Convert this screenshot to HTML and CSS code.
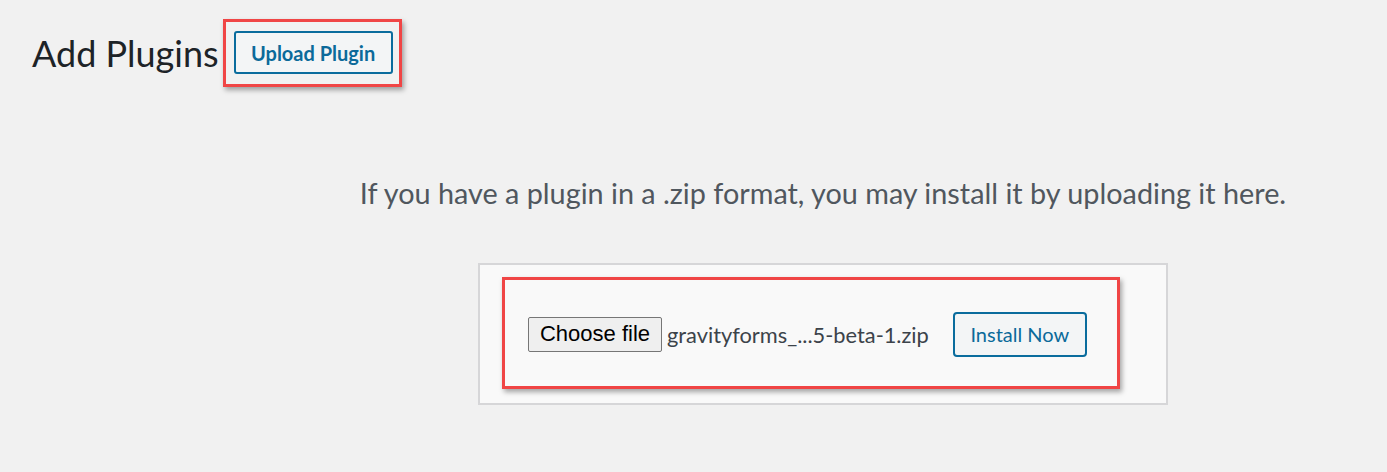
FILE: index.html
```html
<!DOCTYPE html>
<html lang="en">
<head>
<meta charset="utf-8">
<title>Add Plugins</title>
<link rel="stylesheet" href="styles.css">
</head>
<body>
<div class="wrap">
  <header class="page-header">
    <h1 class="page-title">Add Plugins</h1>
    <div class="highlight highlight-top">
      <button class="wp-btn upload-btn" type="button">Upload Plugin</button>
    </div>
  </header>
  <section class="upload-section">
    <p class="install-help">If you have a plugin in a .zip format, you may install it by uploading it here.</p>
    <form class="upload-form">
      <div class="highlight highlight-form">
        <div class="file-row">
          <button class="choose-btn" type="button">Choose file</button>
          <span class="file-name">gravityforms_...5-beta-1.zip</span>
          <button class="wp-btn install-btn" type="button">Install Now</button>
        </div>
      </div>
    </form>
  </section>
</div>
</body>
</html>
```
FILE: styles.css
```css
html, body {
  margin: 0;
  padding: 0;
  background: #f1f1f1;
}
body {
  font-family: "Lato", "Open Sans", "Noto Sans", sans-serif;
  color: #23282d;
}
.wrap {
  display: flex;
  flex-direction: column;
}
.page-header {
  display: flex;
  align-items: center;
  padding: 19px 0 0 32px;
}
.page-title {
  margin: 0 4px 0 0;
  font-weight: 400;
  font-size: 36px;
  line-height: 40px;
  color: #1d2327;
}
.highlight {
  border: 3px solid #f04545;
  box-shadow: 2px 3px 5px rgba(0, 0, 0, 0.35);
}
.highlight-top {
  padding: 9px 6px 10px 8px;
}
.wp-btn {
  background: #f3f5f6;
  border: 2px solid #0a6c9d;
  border-radius: 3px;
  color: #0b6a9a;
  font-family: "Lato", "Open Sans", sans-serif;
  cursor: pointer;
  padding: 0;
}
.upload-btn {
  width: 159px;
  height: 43px;
  font-size: 20px;
  font-weight: 700;
}
.upload-section {
  display: flex;
  flex-direction: column;
  align-items: center;
  padding-left: 259px;
}
.install-help {
  margin: 86px 0 0 0;
  font-size: 28.8px;
  line-height: 40px;
  color: #50575e;
}
.upload-form {
  box-sizing: border-box;
  margin: 50px 0 0 0;
  width: 690px;
  height: 142px;
  border: 2px solid #d6d6d8;
  background: #f9f9f9;
  padding: 12px 0 0 22px;
}
.highlight-form {
  box-sizing: border-box;
  width: 618px;
  height: 112px;
  display: flex;
  align-items: center;
  padding: 2px 0 0 23px;
}
.file-row {
  display: flex;
  align-items: center;
}
.choose-btn {
  width: 134px;
  height: 35px;
  background: #efefef;
  border: 1px solid #767676;
  border-radius: 2px;
  font-family: "Liberation Sans", Arial, sans-serif;
  font-size: 22px;
  color: #000;
  padding: 0;
}
.file-name {
  margin-left: 5px;
  font-size: 21.8px;
  color: #3c434a;
}
.install-btn {
  margin-left: 24px;
  width: 134px;
  height: 45px;
  border-radius: 4px;
  font-size: 20px;
  font-weight: 400;
}
```
